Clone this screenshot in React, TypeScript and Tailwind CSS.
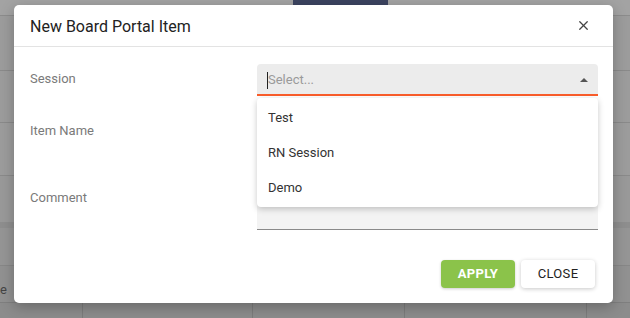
import React from 'react';
import { X } from 'lucide-react';

const sessions = ['Test', 'RN Session', 'Demo'];

const BackgroundTable: React.FC = () => (
  <div className="flex h-[318px] flex-col bg-[#9c9c9c]">
    <div className="flex h-[16px] border-b border-[#8c8c8c] bg-[#a3a3a3]">
      <div className="ml-[293px] h-[5px] w-[95px] bg-[#3c4460]" />
    </div>
    <div className="h-[55px] border-b border-[#8a8a8a]" />
    <div className="h-[52px] border-b border-[#8a8a8a]" />
    <div className="h-[53px] border-b border-[#8a8a8a]" />
    <div className="h-[46px] bg-[#999]" />
    <div className="h-[6px] bg-[#8e8e8e]" />
    <div className="h-[38px] border-b border-[#878787] bg-[#959595]" />
    <div className="flex h-[37px] items-end border-b border-[#7f7f7f] bg-[#919191] pb-[6px]">
      <span className="text-[13px] leading-none text-[#444]">e</span>
    </div>
    <div className="grid flex-1 grid-cols-[83px_170px_152px_182px_1fr] bg-[#8c8c8c]">
      <div className="border-r border-[#7c7c7c]" />
      <div className="border-r border-[#7c7c7c]" />
      <div className="border-r border-[#7c7c7c]" />
      <div className="border-r border-[#7c7c7c]" />
      <div />
    </div>
  </div>
);

export default function App() {
  return (
    <div className="relative h-[318px] w-[630px] overflow-hidden font-['Roboto',sans-serif]">
      <BackgroundTable />

      <div className="absolute left-[14px] top-[5px] flex h-[298px] w-[599px] flex-col rounded-[5px] bg-white shadow-[0_4px_14px_rgba(0,0,0,0.25)]">
        <div className="flex h-[42px] items-center justify-between border-b border-[#e3e3e3] pl-[16px] pr-[22px]">
          <h2 className="pt-[2px] text-[16px] font-normal text-[#222]">New Board Portal Item</h2>
          <X className="h-[15px] w-[15px] text-[#444]" strokeWidth={2} />
        </div>

        <div className="flex flex-1 flex-col pl-[16px] pr-[15px] pt-[17px]">
          <div className="grid grid-cols-[227px_1fr]">
            <span className="pt-[5px] text-[13px] text-[#7a7a7a]">Session</span>
            <div className="relative">
              <div className="flex h-[32px] items-center rounded-t-[4px] border-b-2 border-[#fa5d2b] bg-[#ececec] pl-[10px] pr-[10px] pt-[2px]">
                <span className="h-[17px] w-px bg-[#222]" />
                <span className="flex-1 text-[13px] text-[#9a9a9a]">Select...</span>
                <span className="h-0 w-0 border-x-[4px] border-b-[4px] border-x-transparent border-b-[#555]" />
              </div>

              <ul className="absolute left-0 right-0 top-[34px] z-10 rounded-[4px] bg-white py-[2px] shadow-[0_2px_6px_rgba(0,0,0,0.22)]">
                {sessions.map(s => (
                  <li key={s} className="flex h-[35px] items-center px-[11px] text-[13px] text-[#333]">
                    {s}
                  </li>
                ))}
              </ul>
            </div>
          </div>

          <div className="mt-[20px] grid grid-cols-[227px_1fr]">
            <span className="pt-[5px] text-[13px] text-[#7a7a7a]">Item Name</span>
            <div className="h-[32px] border-b border-[#8a8a8a] bg-[#f3f3f3]" />
          </div>

          <div className="mt-[20px] grid grid-cols-[227px_1fr]">
            <span className="pt-[20px] text-[13px] text-[#7a7a7a]">Comment</span>
            <div className="h-[62px] border-b border-[#8a8a8a] bg-[#f3f3f3]" />
          </div>

          <div className="mt-[30px] flex justify-end gap-[6px] pr-[3px]">
            <button className="h-[28px] w-[74px] rounded-[4px] bg-[#8bc34a] text-[13px] font-bold tracking-wide text-white shadow-[0_1px_3px_rgba(0,0,0,0.2)]">
              APPLY
            </button>
            <button className="h-[28px] w-[74px] rounded-[4px] bg-white text-[13px] font-normal tracking-wide text-[#222] shadow-[0_1px_4px_rgba(0,0,0,0.22)]">
              CLOSE
            </button>
          </div>
        </div>
      </div>
    </div>
  );
}
